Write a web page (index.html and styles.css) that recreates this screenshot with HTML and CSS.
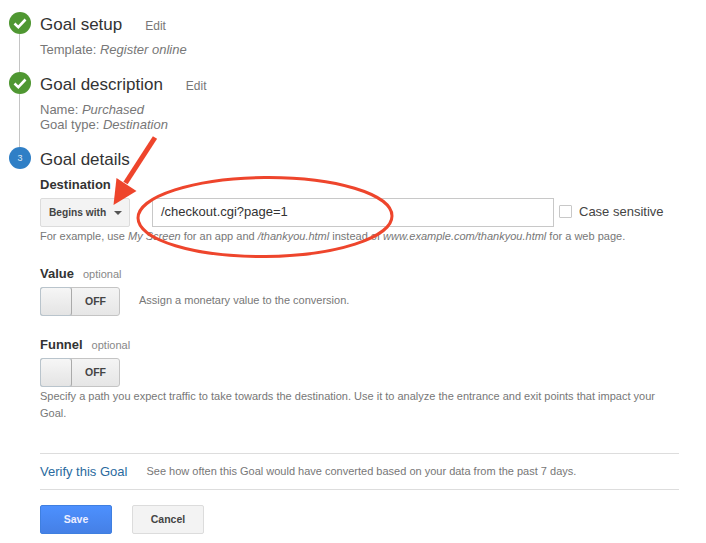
FILE: index.html
```html
<!DOCTYPE html>
<html lang="en">
<head>
<meta charset="utf-8">
<title>Goal details</title>
<link rel="stylesheet" href="styles.css">
</head>
<body>
<main class="page">
  <section class="step step-setup">
    <div class="rail">
      <span class="badge badge-done"><svg viewBox="0 0 22 22" width="22" height="22"><path d="M5.500 11.500l3.800 3.600 7.200-7.600" fill="none" stroke="#fff" stroke-width="2.600"/></svg></span>
      <span class="rail-line"></span>
    </div>
    <div class="step-body">
      <div class="step-head"><h2 class="step-title">Goal setup</h2><a class="edit">Edit</a></div>
      <p class="summary">Template: <em>Register online</em></p>
    </div>
  </section>
  <section class="step step-description">
    <div class="rail">
      <span class="badge badge-done"><svg viewBox="0 0 22 22" width="22" height="22"><path d="M5.500 11.500l3.800 3.600 7.200-7.600" fill="none" stroke="#fff" stroke-width="2.600"/></svg></span>
      <span class="rail-line"></span>
    </div>
    <div class="step-body">
      <div class="step-head"><h2 class="step-title">Goal description</h2><a class="edit">Edit</a></div>
      <p class="summary">Name: <em>Purchased</em><br>Goal type: <em>Destination</em></p>
    </div>
  </section>
  <section class="step step-details">
    <div class="rail"><span class="badge badge-current">3</span></div>
    <div class="step-body">
      <h2 class="step-title">Goal details</h2>
      <div class="field-label">Destination</div>
      <div class="destination-row">
        <button class="select">Begins with<span class="caret"></span></button>
        <div class="text-input">/checkout.cgi?page=1</div>
        <span class="checkbox"></span>
        <span class="checkbox-label">Case sensitive</span>
      </div>
      <p class="hint">For example, use <em>My Screen</em> for an app and <em>/thankyou.html</em> instead of <em>www.example.com/thankyou.html</em> for a web page.</p>

      <div class="option option-value">
        <div class="option-label"><b>Value</b><span class="optional">optional</span></div>
        <div class="toggle-row">
          <div class="toggle"><span class="knob"></span><span class="toggle-text">OFF</span></div>
          <span class="toggle-note">Assign a monetary value to the conversion.</span>
        </div>
      </div>

      <div class="option option-funnel">
        <div class="option-label"><b>Funnel</b><span class="optional">optional</span></div>
        <div class="toggle"><span class="knob"></span><span class="toggle-text">OFF</span></div>
        <p class="funnel-note">Specify a path you expect traffic to take towards the destination. Use it to analyze the entrance and exit points that impact your Goal.</p>
      </div>

      <div class="verify">
        <a class="verify-link">Verify this Goal</a>
        <span class="verify-note">See how often this Goal would have converted based on your data from the past 7 days.</span>
      </div>
      <div class="actions">
        <button class="btn btn-save">Save</button>
        <button class="btn btn-cancel">Cancel</button>
      </div>
    </div>
  </section>
</main>
<svg class="annotation" width="706" height="543" viewBox="0 0 706 543" aria-hidden="true">
  <ellipse cx="265" cy="217" rx="127" ry="39.500" transform="rotate(-0.5 265 217)" fill="none" stroke="#ee452c" stroke-width="3"/>
  <path d="M155 137.500L125.500 183" fill="none" stroke="#ee452c" stroke-width="5"/>
  <path d="M113.500 205L136.500 191L116.500 178z" fill="#ee452c"/>
</svg>
</body>
</html>
```
FILE: styles.css
```css
* { box-sizing: border-box; }
html, body { margin: 0; padding: 0; background: #fff; }
body {
  width: 706px;
  height: 543px;
  overflow: hidden;
  position: relative;
  font-family: "Liberation Sans", Arial, sans-serif;
  color: #333;
}
.page { padding: 12px 0 0 9px; }
.step { display: flex; }
.rail { width: 31px; flex: none; display: flex; flex-direction: column; align-items: flex-start; }
.badge {
  width: 22px; height: 22px; border-radius: 50%;
  display: flex; align-items: center; justify-content: center;
  flex: none;
}
.badge-done { background: #4f9732; }
.badge-current { background: #2f7fc6; color: #dce9f5; font-size: 9px; }
.rail-line { width: 1px; flex: 1; background: #c4c4c4; margin-left: 10px; }
.step-setup { height: 60px; }
.step-description { height: 75px; }
.step-body { width: 640px; padding-top: 1px; }
.step-head { display: flex; align-items: baseline; }
.step-title { margin: 0; font-size: 17px; line-height: 24px; font-weight: 400; color: #333; }
.edit { margin-left: 23px; font-size: 12px; color: #777; }
.summary { margin: 5px 0 0; font-size: 13px; line-height: 15px; color: #777; }
.field-label { margin-top: 5px; font-size: 13px; line-height: 15px; font-weight: 700; color: #333; }
.destination-row { display: flex; align-items: center; margin-top: 6px; height: 29px; }
.select {
  width: 90px; height: 29px; padding: 0 0 0 8px;
  display: flex; align-items: center;
  border: 1px solid #dcdcdc; border-radius: 2px;
  background: #f3f3f3;
  font: 700 10.200px "Liberation Sans", Arial, sans-serif; color: #444;
}
.caret {
  margin-left: 8px; width: 0; height: 0;
  border-left: 4px solid transparent; border-right: 4px solid transparent;
  border-top: 4px solid #555;
}
.text-input {
  margin-left: 22px; width: 402px; height: 29px; padding: 0 8px;
  border: 1px solid #c8c8c8;
  font-size: 13px; line-height: 25px; color: #333;
}
.checkbox { margin: 0 0 2px 5px; width: 13px; height: 13px; border: 1px solid #c8c8c8; border-radius: 1px; }
.checkbox-label { margin: 0 0 3px 7px; font-size: 13px; color: #444; }
.hint { margin: 1px 0 0; font-size: 11px; line-height: 16px; color: #777; white-space: nowrap; }
.option-value { margin-top: 22px; }
.option-funnel { margin-top: 21px; }
.option-label { font-size: 13px; line-height: 15px; color: #333; }
.optional { margin-left: 9px; font-size: 11px; color: #888; }
.toggle-row { display: flex; align-items: center; }
.toggle {
  margin-top: 5px; width: 80px; height: 29px; display: flex;
  border: 1px solid #c4c4c4; border-radius: 3px;
  background: linear-gradient(#f4f4f4, #e6e6e6);
}
.knob {
  width: 32px; margin: -1px 0 -1px -1px;
  border: 1px solid #b9c4cc; border-right-color: #aaa; border-radius: 3px;
  background: linear-gradient(#f6f6f6, #e4e4e4);
}
.toggle-text { flex: 1; text-align: center; font-size: 10.500px; font-weight: 700; line-height: 27px; color: #444; }
.toggle-note { margin: 2px 0 0 19px; font-size: 11px; color: #777; }
.funnel-note { margin: 0; padding-top: 1px; width: 630px; font-size: 11px; line-height: 17px; color: #777; }
.verify {
  margin-top: 31px; width: 639px; height: 37px; padding-bottom: 1px;
  display: flex; align-items: center;
  border-top: 1px solid #ddd; border-bottom: 1px solid #ddd;
}
.verify-link { font-size: 13px; color: #2a6a9e; }
.verify-note { margin-left: 19px; font-size: 11px; color: #777; }
.actions { display: flex; gap: 20px; margin-top: 15px; }
.btn {
  width: 72px; height: 29px; padding: 0 0 2px; border-radius: 2px;
  font: 700 10.500px "Liberation Sans", Arial, sans-serif;
}
.btn-save { background: linear-gradient(#4d90fe, #4580e6); border: 1px solid #3f7fe0; color: #eef; }
.btn-cancel { background: #f3f3f3; border: 1px solid #dcdcdc; color: #444; }
.annotation { position: absolute; left: 0; top: 0; pointer-events: none; }
```
